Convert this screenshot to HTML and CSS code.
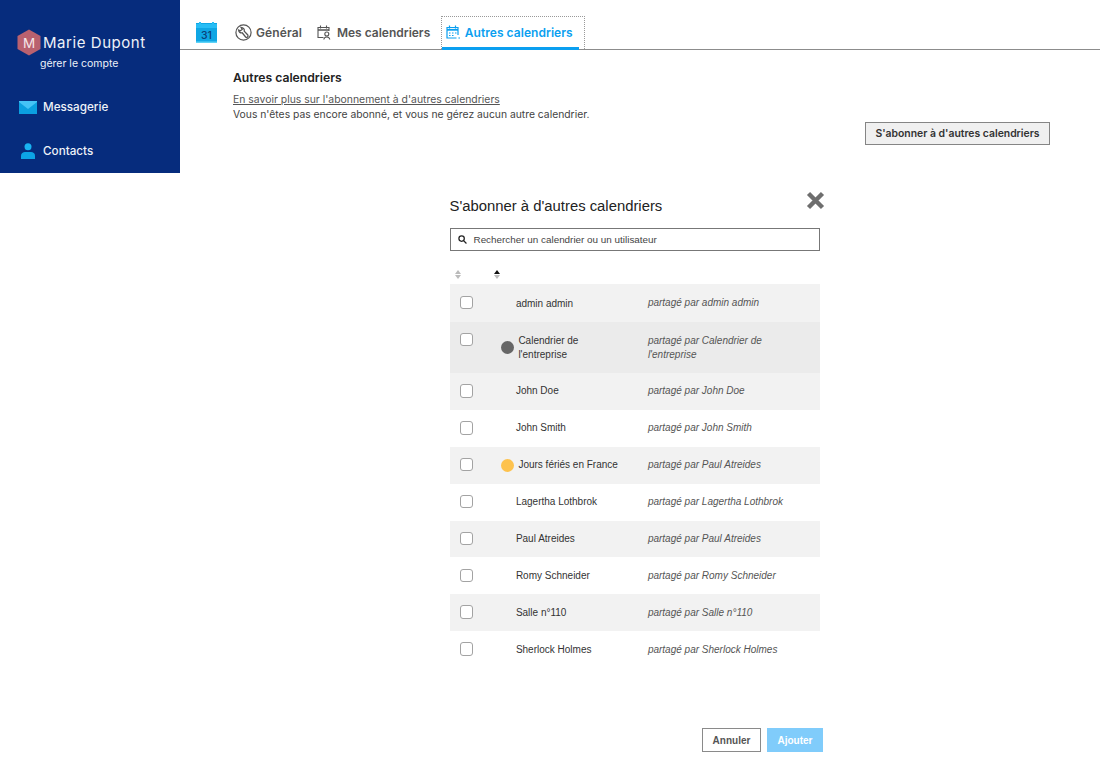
FILE: index.html
```html
<!DOCTYPE html>
<html lang="fr">

<head>
    <meta charset="UTF-8">
    <meta name="viewport" content="width=device-width, initial-scale=1.0">
    <title>Calendrier - préférences</title>
    <link rel="stylesheet" href="styles.css">
</head>

<body>
    <div class="page">
        <aside class="sidebar">
            <div class="account">
                <div class="account-top">
                    <svg class="avatar" width="24" height="27" viewBox="0 0 24 27">
                        <path d="M12 0.5 L23.5 7 V20 L12 26.5 L0.5 20 V7 Z" fill="#b9616f" />
                        <text x="12" y="18.5" text-anchor="middle" class="avatar-letter">M</text>
                    </svg>
                    <span class="account-name">Marie Dupont</span>
                </div>
                <a class="account-link">gérer le compte</a>
            </div>
            <a class="side-item side-mail">
                <svg width="18" height="13" viewBox="0 0 18 13">
                    <rect width="18" height="13" fill="#0b9fe0" />
                    <path d="M0 0 H18 V1 L9 8 L0 1 Z" fill="#45c3f6" />
                </svg>
                Messagerie
            </a>
            <a class="side-item side-contacts">
                <svg width="18" height="16" viewBox="0 0 18 16">
                    <circle cx="9" cy="3.8" r="3.5" fill="#19b4f2" />
                    <path d="M2 16 V12.5 C2 10.2 4 9 6 9 H12 C14 9 16 10.2 16 12.5 V16 Z" fill="#0ca4e6" />
                </svg>
                Contacts
            </a>
        </aside>

        <main class="content">
            <nav class="tabs">
                <svg class="cal-logo" width="21" height="21" viewBox="0 0 21 21">
                    <rect y="1" width="21" height="19" fill="#0fa6e4" />
                    <rect x="3" y="0" width="2" height="3" fill="#27bdf5" />
                    <rect x="16" y="0" width="2" height="3" fill="#27bdf5" />
                    <rect y="2" width="21" height="4" fill="#27bdf5" />
                    <rect y="19.5" width="21" height="1.5" fill="#5fd3f7" />
                    <text x="10.5" y="16.5" text-anchor="middle" class="cal-number">31</text>
                </svg>
                <a class="tab tab-general">
                    <svg width="17" height="17" viewBox="0 0 17 17" fill="none" stroke="#555" stroke-width="1.2">
                        <circle cx="8.5" cy="8.5" r="7.6" />
                        <path d="M3.6 6 C3.8 8.2 5.4 9.2 7.2 8.8 L10.6 13 C11.8 14.2 13.8 12.6 12.8 11 L9.2 7.2 C9.8 5.2 8.4 3.4 6 3.3 L7.2 5.4 L5.4 6.8 Z" stroke-width="1.3" />
                    </svg>
                    Général
                </a>
                <a class="tab tab-mine">
                    <svg width="15" height="15" viewBox="0 0 15 15" fill="none" stroke="#555" stroke-width="1.1">
                        <path d="M6.5 12.5 H1 V2.5 H12 V6" />
                        <path d="M3.5 0.5 V3.5 M9.5 0.5 V3.5" />
                        <path d="M1 5 H12" stroke-width="1.5" />
                        <circle cx="9.8" cy="9" r="2" />
                        <path d="M6.8 14.5 C7.1 12.6 8.3 12 9.8 12 C11.3 12 12.5 12.6 12.8 14.5" />
                    </svg>
                    Mes calendriers
                </a>
                <a class="tab tab-other">
                    <svg width="14" height="15" viewBox="0 0 14 15" fill="none" stroke="#0a9ff0" stroke-width="1.2">
                        <path d="M10.5 13 H1 V2.5 H12 V10" />
                        <path d="M3.5 0.5 V3.5 M9.5 0.5 V3.5" />
                        <path d="M1 4.8 H12" stroke-width="1.8" />
                        <path d="M3 8 H4.5 M6 8 H7.5 M9 8 H10.5 M3 10.5 H4.5 M6 10.5 H7.5" />
                        <path d="M12.4 13 H14" />
                    </svg>
                    Autres calendriers
                </a>
            </nav>

            <section class="section">
                <h2>Autres calendriers</h2>
                <a class="more-link">En savoir plus sur l'abonnement à d'autres calendriers</a>
                <p>Vous n'êtes pas encore abonné, et vous ne gérez aucun autre calendrier.</p>
                <div class="section-actions">
                    <button class="btn-subscribe">S'abonner à d'autres calendriers</button>
                </div>
            </section>
        </main>
    </div>

    <div class="dialog">
        <div class="dialog-head">
            <h3>S'abonner à d'autres calendriers</h3>
            <svg class="dialog-close" width="19" height="19" viewBox="0 0 19 19">
                <path d="M2.5 2.5 L16.5 16.5 M16.5 2.5 L2.5 16.5" stroke="#6e6e6e" stroke-width="4.4" />
            </svg>
        </div>

        <div class="search">
            <svg width="9" height="9" viewBox="0 0 10 10" fill="none" stroke="#222" stroke-width="1.4">
                <circle cx="4" cy="4" r="3" />
                <path d="M6.2 6.2 L9.4 9.4" />
            </svg>
            Rechercher un calendrier ou un utilisateur
        </div>

        <div class="sort-row">
            <span class="sort sort-first"><i class="up"></i><i class="down"></i></span>
            <span class="sort sort-second"><i class="up active"></i><i class="down"></i></span>
        </div>

        <div class="rows">
            <div class="row row-first">
                <span class="check"></span>
                <span class="name">admin admin</span>
                <span class="shared">partagé par admin admin</span>
            </div>
            <div class="row row-hover row-tall">
                <span class="check"></span>
                <span class="dot dot-grey"></span>
                <span class="name has-dot">Calendrier de l'entreprise</span>
                <span class="shared">partagé par Calendrier de l'entreprise</span>
            </div>
            <div class="row row-odd">
                <span class="check"></span>
                <span class="name">John Doe</span>
                <span class="shared">partagé par John Doe</span>
            </div>
            <div class="row">
                <span class="check"></span>
                <span class="name">John Smith</span>
                <span class="shared">partagé par John Smith</span>
            </div>
            <div class="row row-odd">
                <span class="check"></span>
                <span class="dot dot-yellow"></span>
                <span class="name has-dot">Jours fériés en France</span>
                <span class="shared">partagé par Paul Atreides</span>
            </div>
            <div class="row">
                <span class="check"></span>
                <span class="name">Lagertha Lothbrok</span>
                <span class="shared">partagé par Lagertha Lothbrok</span>
            </div>
            <div class="row row-odd">
                <span class="check"></span>
                <span class="name">Paul Atreides</span>
                <span class="shared">partagé par Paul Atreides</span>
            </div>
            <div class="row">
                <span class="check"></span>
                <span class="name">Romy Schneider</span>
                <span class="shared">partagé par Romy Schneider</span>
            </div>
            <div class="row row-odd">
                <span class="check"></span>
                <span class="name">Salle n°110</span>
                <span class="shared">partagé par Salle n°110</span>
            </div>
            <div class="row">
                <span class="check"></span>
                <span class="name">Sherlock Holmes</span>
                <span class="shared">partagé par Sherlock Holmes</span>
            </div>
        </div>

        <div class="dialog-actions">
            <button class="btn-cancel">Annuler</button>
            <button class="btn-add">Ajouter</button>
        </div>
    </div>
</body>

</html>
```

FILE: styles.css
```css
body {
    margin: 0;
    font-family: "Inter", "Liberation Sans", sans-serif;
    color: #333;
    background-color: white;
}

a {
    color: inherit;
}

.page {
    display: flex;
    align-items: flex-start;
}

/* меню слева */
.sidebar {
    width: 180px;
    height: 173px;
    flex-shrink: 0;
    box-sizing: border-box;
    padding-top: 29px;
    background-color: #062c7d;
    color: #eef2f8;
}

.account-top {
    display: flex;
    align-items: center;
    padding-left: 17px;
    gap: 2px;
}

.avatar-letter {
    font-family: "Inter", sans-serif;
    font-size: 13.5px;
    fill: #f6e6e8;
}

.account-name {
    font-size: 15px;
    letter-spacing: 0.55px;
}

.account-link {
    display: block;
    margin-top: 1px;
    margin-left: 40px;
    font-size: 10.5px;
}

.side-item {
    display: flex;
    align-items: center;
    gap: 6px;
    padding-left: 19px;
    font-size: 11.7px;
    font-weight: 500;
}

.side-mail {
    margin-top: 30px;
}

.side-contacts {
    margin-top: 29px;
}

/* вкладки */
.content {
    flex: 1;
    min-width: 0;
}

.tabs {
    height: 49px;
    display: flex;
    align-items: flex-start;
    border-bottom: 1px solid #8c8c8c;
}

.cal-logo {
    margin-top: 22px;
    margin-left: 16px;
}

.cal-number {
    font-family: "Inter", sans-serif;
    font-size: 10.5px;
    font-weight: 500;
    fill: #0b3f78;
}

.tab {
    display: flex;
    align-items: center;
    box-sizing: border-box;
    height: 33px;
    margin-top: 16px;
    font-size: 12px;
    font-weight: 600;
    color: #555;
    white-space: nowrap;
}

.tab-general {
    margin-left: 18px;
    gap: 4px;
    letter-spacing: 0.1px;
}

.tab-mine {
    margin-left: 15px;
    gap: 5px;
}

.tab-other {
    margin-left: 10.5px;
    gap: 5px;
    width: 144px;
    padding-left: 4px;
    padding-bottom: 2px;
    letter-spacing: 0.05px;
    color: #0a9ff0;
    border: 1px dotted #999;
    border-bottom: none;
    position: relative;
}

.tab-other::after {
    content: "";
    position: absolute;
    left: 0;
    right: 5px;
    bottom: -1px;
    height: 3px;
    background-color: #0a9ff0;
}

/* содержимое */
.section {
    padding: 20px 50px 0 53px;
    color: #444;
}

.section h2 {
    margin: 0 0 7px;
    font-size: 12.2px;
    font-weight: 600;
    color: #222;
}

.more-link {
    display: block;
    font-size: 10.42px;
    line-height: 15px;
    text-decoration: underline;
    color: #555;
}

.section p {
    margin: 0;
    font-size: 10.33px;
    line-height: 15px;
}

.section-actions {
    display: flex;
    justify-content: flex-end;
}

.btn-subscribe {
    width: 185px;
    height: 23px;
    padding: 0;
    font-family: inherit;
    font-size: 10.4px;
    font-weight: 600;
    color: #333;
    background-color: #f0f0f0;
    border: 1px solid #858585;
}

/* диалог поверх страницы */
.dialog {
    position: absolute;
    left: 450px;
    top: 190px;
    width: 370px;
    font-family: "Liberation Sans", sans-serif;
}

.dialog-head {
    position: relative;
    height: 38px;
}

.dialog-head h3 {
    margin: 0;
    margin-left: -0.5px;
    padding-top: 8px;
    font-size: 14.85px;
    font-weight: 400;
    line-height: 17px;
    color: #222;
}

.dialog-close {
    position: absolute;
    left: 356px;
    top: 1px;
}

.search {
    display: flex;
    align-items: center;
    gap: 7px;
    box-sizing: border-box;
    height: 23px;
    padding-left: 6.5px;
    font-size: 9.9px;
    color: #444;
    border: 1px solid #777;
}

.sort-row {
    position: relative;
    height: 33px;
}

.sort {
    position: absolute;
    top: 19px;
    display: flex;
    flex-direction: column;
    gap: 1px;
}

.sort-first {
    left: 5px;
}

.sort-second {
    left: 44px;
}

.sort i {
    display: block;
    width: 0;
    height: 0;
    border-left: 3px solid transparent;
    border-right: 3px solid transparent;
}

.sort .up {
    border-bottom: 4px solid #bbb;
}

.sort .down {
    border-top: 4px solid #bbb;
}

.sort .up.active {
    border-bottom-color: #111;
}

.row {
    display: flex;
    align-items: center;
    box-sizing: border-box;
    height: 36.875px;
    padding-left: 9.5px;
    font-size: 10px;
    line-height: 14px;
    color: #333;
}

.row-odd,
.row-first {
    background-color: #f2f2f2;
}

.row-first {
    height: 38px;
}

.row-first .name {
    margin-top: 2px;
}

.row-hover {
    background-color: #ebebeb;
}

.row-tall {
    height: 51px;
}

.row-tall .check {
    align-self: flex-start;
    margin-top: 11px;
}

.row-tall .name {
    margin-top: 0;
}

.check {
    width: 11.4px;
    height: 11.4px;
    flex-shrink: 0;
    margin-top: -1px;
    background-color: white;
    border: 1px solid #a3a3a3;
    border-radius: 3px;
}

.name {
    width: 132px;
    flex-shrink: 0;
    margin-left: 43px;
}

.name.has-dot {
    width: 100px;
    margin-left: 4.5px;
    margin-right: 29.5px;
}

.dot {
    width: 13px;
    height: 13px;
    flex-shrink: 0;
    margin-left: 28px;
    border-radius: 50%;
}

.dot-grey {
    background-color: #666;
}

.dot-yellow {
    background-color: #fdc24d;
}

.shared {
    width: 155px;
    flex-shrink: 0;
    font-style: italic;
    color: #555;
}

.row-tall .shared {
    width: 132px;
}

.dialog-actions {
    display: flex;
    justify-content: flex-end;
    gap: 6px;
    margin-top: 60px;
    margin-right: -3px;
}

.btn-cancel,
.btn-add {
    height: 24px;
    padding: 0;
    font-family: inherit;
    font-size: 10px;
    font-weight: 700;
}

.btn-cancel {
    width: 59px;
    color: #555;
    background-color: white;
    border: 1px solid #8a8a8a;
}

.btn-add {
    width: 56px;
    color: white;
    background-color: #80ccfb;
    border: none;
}
```
